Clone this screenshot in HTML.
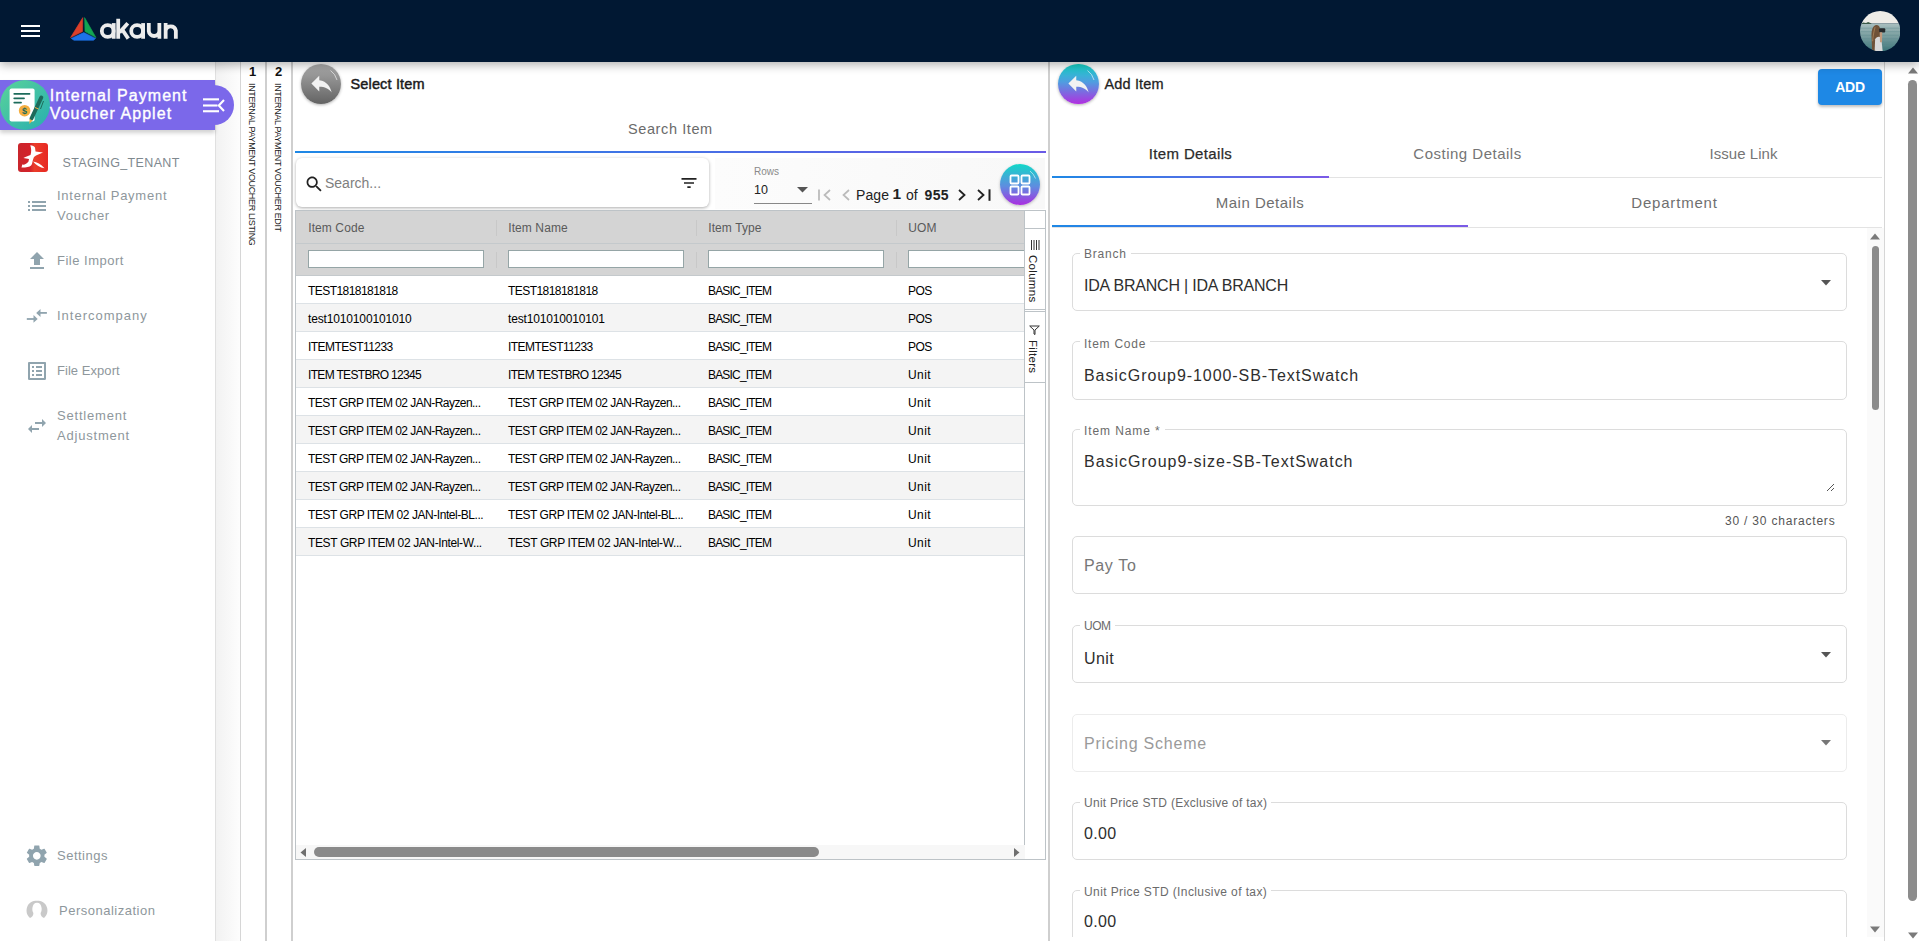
<!DOCTYPE html>
<html><head><meta charset="utf-8">
<style>
*{box-sizing:border-box;margin:0;padding:0}
html,body{width:1919px;height:941px;overflow:hidden;background:#fff;font-family:"Liberation Sans",sans-serif;color:#333}
.abs{position:absolute}
#hdr{position:absolute;left:0;top:0;width:1919px;height:62px;background:#011833;z-index:5;box-shadow:0 3px 9px rgba(0,0,0,.3)}
#side{position:absolute;left:0;top:62px;width:216px;height:879px;background:#fff;border-right:1px solid #e0e0e0}
.mi{position:absolute;left:57px;font-size:13px;line-height:20px;color:#8e979c;letter-spacing:0.5px}
.strip{position:absolute;top:62px;height:879px}
.vt{position:absolute;writing-mode:vertical-rl;font-size:9px;color:#222;white-space:nowrap;letter-spacing:0}
.gr{position:absolute;left:0;width:728px;height:28px;border-bottom:1px solid #dde2e6;font-size:12px;color:#000;letter-spacing:-0.55px}
.gr span{position:absolute;top:8px;white-space:nowrap;margin-left:-1px}
.gh{position:absolute;top:10px;font-size:12px;color:#5a5a5a;letter-spacing:0.1px;margin-left:-0.8px}
.gs{position:absolute;top:9px;width:1px;height:16px;background:#c8c8c8}
.gf{position:absolute;top:39.3px;width:176px;height:17.3px;background:#fff;border:1px solid #95a5a6}
.tab{position:absolute;top:83px;width:277px;text-align:center;font-size:15px;color:#757575;letter-spacing:0.35px}
.tab2{position:absolute;top:132px;width:416px;text-align:center;font-size:15px;color:#6f6f6f;letter-spacing:0.3px}
.fs{position:absolute;left:22px;width:775px;border:1px solid #dcdcdc;border-radius:5px;padding:0 7px}
.fs legend{font-size:12px;color:#6b6b6b;letter-spacing:0.7px;padding:0 4px;line-height:12px;margin-left:0}
.box{position:absolute;left:22px;width:775px;border:1px solid #dcdcdc;border-radius:5px}
.lbl{position:absolute;left:30px;padding:0 4px;background:#fff;font-size:12px;line-height:12px;color:#6b6b6b;white-space:nowrap}
.val{position:absolute;left:34px;font-size:16px;color:#2e2e2e;letter-spacing:0.9px;white-space:nowrap}
.arr{position:absolute;left:771px}
</style></head><body>
<div id="hdr">
  <div class="abs" style="left:20.5px;top:25px;width:19px;height:2px;background:#fff"></div>
  <div class="abs" style="left:20.5px;top:29.7px;width:19px;height:2px;background:#fff"></div>
  <div class="abs" style="left:20.5px;top:35px;width:19px;height:2px;background:#fff"></div>
  <svg class="abs" style="left:70px;top:17px" width="27" height="24" viewBox="0 0 27 24">
    <polygon points="12.8,0.6 0.5,20.6 12.5,14.6" fill="#dc3f2a" stroke="#dc3f2a" stroke-width=".6" stroke-linejoin="round"/>
    <polygon points="14.6,0.6 26,20.6 15,14.6" fill="#13a552" stroke="#13a552" stroke-width=".6" stroke-linejoin="round"/>
    <polygon points="1.2,21.4 13.8,15.6 25.6,21.4 23.5,23.3 4,23.3" fill="#1d72e8" stroke="#1d72e8" stroke-width=".6" stroke-linejoin="round"/>
  </svg>
  <svg class="abs" style="left:0;top:0" width="200" height="60" viewBox="0 0 200 60"><g fill="none" stroke="#ececec" stroke-width="3.8">
    <circle cx="107.7" cy="30.95" r="5.9"/><path d="M113.7 23.1V38.75"/>
    <path d="M118.2 18.75V38.75"/><path d="M119.5 32.5L127.8 23.3"/><path d="M122.3 29.8L128.3 38.6"/>
    <circle cx="137.1" cy="30.95" r="5.9"/><path d="M143.1 23.1V38.75"/>
    <path d="M148.8 23.1V31.2A5.3 5.3 0 0 0 159.35 31.2V23.1M159.35 31V38.75"/>
    <path d="M165.65 38.75V30.6A5.2 5.2 0 0 1 175.85 30.6V38.75M165.65 30.8V23.1"/>
  </g></svg>
  <svg class="abs" style="left:1860px;top:10.8px" width="40.4" height="40.4" viewBox="0 0 40 40">
    <defs><clipPath id="cc"><circle cx="20" cy="20" r="20"/></clipPath>
    <linearGradient id="sea" x1="0" y1="0" x2="0" y2="1"><stop offset="0" stop-color="#a9bfbf"/><stop offset=".45" stop-color="#7a9ea0"/><stop offset="1" stop-color="#3b7479"/></linearGradient></defs>
    <g clip-path="url(#cc)">
      <rect x="0" y="0" width="40" height="12.3" fill="#eeece7"/>
      <rect x="0" y="12.3" width="40" height="28" fill="url(#sea)"/>
      <g stroke="#5d8a8e" stroke-width=".6" opacity=".7"><path d="M0 17h40M0 20.5h40M0 24h40M0 27.5h40M0 31h40M0 34.5h40"/></g>
      <path d="M1.5 12.8 L3 11.5 L6 11.8 L8 11 L11 12.2 L11.5 12.8Z" fill="#3b5a48"/>
      <path d="M12 40 L11.5 27 C11 21 12 14.5 15.8 13.8 C18.5 13.6 19.8 15.5 20 18.5 L19.5 29 L18 40Z" fill="#6f5238"/>
      <path d="M12.5 30 C13 24 14 19 15 16" stroke="#a07a52" stroke-width="1" fill="none"/>
      <path d="M14.5 40 L15 28 C16 25.5 19 24.5 21 26.5 L22.5 40Z" fill="#d9d9d9"/>
      <rect x="19" y="17" width="6" height="4.2" rx="1" fill="#25292b"/>
      <path d="M19.5 21 L22 21 L21.8 31 L19.8 31Z" fill="#c29a7d"/>
    </g>
  </svg>

</div>

<div id="side">
</div>
<div class="abs" style="z-index:3;left:0;top:80px;width:215px;height:50px;background:#7b68ea;box-shadow:0 3px 4px rgba(0,0,0,.18)"></div>
<div class="abs" style="z-index:3;left:195px;top:85px;width:39px;height:40px;border-radius:0 20px 20px 0;background:#7b68ea"></div>
<div class="abs" style="z-index:3;left:0;top:80px;width:50px;height:50px;border-radius:50%;background:linear-gradient(135deg,#5ad39a,#27aeb0)"></div>
<svg class="abs" style="z-index:3;left:0;top:80px" width="50" height="50" viewBox="0 0 50 50">
  <rect x="9.6" y="8.4" width="25" height="33" rx="2" fill="#fff"/>
  <rect x="13.4" y="13" width="17" height="1.7" rx=".8" fill="#1d6b5b"/>
  <rect x="13.4" y="17.6" width="11.5" height="1.7" rx=".8" fill="#1d6b5b"/>
  <rect x="13.4" y="21.8" width="8.5" height="1.7" rx=".8" fill="#1d6b5b"/>
  <circle cx="24.6" cy="30.7" r="5.8" fill="#f4ae3f"/>
  <text x="24.6" y="34" font-size="9" text-anchor="middle" fill="#1d6b5b" font-family="Liberation Sans" font-weight="bold">$</text>
  <line x1="31.5" y1="38.5" x2="41.3" y2="17.5" stroke="#1d6b5b" stroke-width="4" stroke-linecap="round"/>
  <line x1="43.5" y1="21" x2="40.5" y2="29" stroke="#1d6b5b" stroke-width="1"/>
  <line x1="35" y1="27.5" x2="38.5" y2="29" stroke="#f4ae3f" stroke-width="1"/>
  <polygon points="29.3,44 29.6,39 32.6,40.4" fill="#f4ae3f"/>
</svg>
<div class="abs" style="z-index:3;left:49.8px;top:87px;font-size:16px;line-height:18px;color:#fff;letter-spacing:1.05px;-webkit-text-stroke:0.35px #fff">Internal Payment<br>Voucher Applet</div>
<svg class="abs" style="z-index:4;left:202.5px;top:97px" width="24" height="17" viewBox="0 0 24 17">
  <rect x="0" y="1.3" width="16" height="2.1" fill="#fff"/>
  <rect x="0" y="7.45" width="14.5" height="2.1" fill="#fff"/>
  <rect x="0" y="13.2" width="16" height="2.1" fill="#fff"/>
  <polyline points="21,3 15.8,8.5 21,14" fill="none" stroke="#fff" stroke-width="2.1"/>
</svg>
<div class="abs" style="left:18px;top:143.4px;width:30px;height:28.6px;border-radius:3px;background:linear-gradient(90deg,#c9262c,#d4222a 40%,#e93d2a 55%,#e82822)"></div>
<svg class="abs" style="left:18px;top:143.4px" width="30" height="29" viewBox="0 0 30 29">
  <path d="M12.3 2.3 C14.5 2.5 16.5 3.5 17 4.5 L17.5 8.5 L25 9.6 C22 11 18.5 12 16 14 C15 16 14.5 19 14 21 C13 23.5 11 24 7 24.5 L3.5 24.5 L4.3 21.5 C6 22 9 21 10.5 18.5 L11 16 L5.4 15 C8 13.5 11 12.5 12.5 12 C13.5 9 13.5 6 12.3 2.3 Z M15 18.5 C19 19 23 21 26.5 25.3 C22 24.5 18 22 15 18.5 Z" fill="#fff"/>
</svg>
<div class="abs" style="left:62.5px;top:156px;font-size:12.5px;line-height:14px;color:#7f898f;letter-spacing:0.35px">STAGING_TENANT</div>
<div class="mi" style="top:186px;letter-spacing:0.75px">Internal Payment<br>Voucher</div>
<svg class="abs" style="left:25px;top:194px" width="24" height="24" viewBox="0 0 24 24"><path fill="#90a4ae" d="M3 13h2v-2H3v2zm0 4h2v-2H3v2zm0-8h2V7H3v2zm4 4h14v-2H7v2zm0 4h14v-2H7v2zM7 7v2h14V7H7z"/></svg>
<div class="mi" style="top:251px">File Import</div>
<svg class="abs" style="left:24.5px;top:249px" width="24" height="24" viewBox="0 0 24 24"><path fill="#90a4ae" d="M9 16h6v-6h4l-7-7-7 7h4zm-4 2h14v2H5z"/></svg>
<div class="mi" style="top:306px;letter-spacing:1.0px">Intercompany</div>
<svg class="abs" style="left:20px;top:300px" width="40" height="30" viewBox="0 0 40 30"><g fill="#90a4ae"><rect x="6.8" y="18.1" width="8" height="1.8"/><polygon points="13.5,15 17.7,19 13.5,22.8"/><rect x="19.5" y="12" width="7.4" height="1.8"/><polygon points="20.5,8.9 16.2,12.9 20.5,16.9"/></g></svg>
<div class="mi" style="top:361px;letter-spacing:0.05px">File Export</div>
<svg class="abs" style="left:24.6px;top:359px" width="24" height="24" viewBox="0 0 24 24"><path fill="#90a4ae" d="M19 5v14H5V5h14m1.1-2H3.9c-.5 0-.9.4-.9.9v16.2c0 .4.4.9.9.9h16.2c.4 0 .9-.5.9-.9V3.9c0-.5-.5-.9-.9-.9zM11 7h6v2h-6V7zm0 4h6v2h-6v-2zm0 4h6v2h-6zM7 7h2v2H7zm0 4h2v2H7zm0 4h2v2H7z"/></svg>
<div class="mi" style="top:406px;letter-spacing:0.8px">Settlement<br>Adjustment</div>
<svg class="abs" style="left:25px;top:413.8px" width="24" height="24" viewBox="0 0 24 24"><path fill="#90a4ae" d="M6.99 11L3 15l3.99 4v-3H14v-2H6.99v-3zM21 9l-3.99-4v3H10v2h7.01v3L21 9z"/></svg>
<div class="mi" style="top:846px">Settings</div>
<svg class="abs" style="left:24.2px;top:843.2px" width="25.6" height="25.6" viewBox="0 0 24 24"><path fill="#90a4ae" d="M19.14 12.94c.04-.3.06-.61.06-.94 0-.32-.02-.64-.07-.94l2.03-1.58c.18-.14.23-.41.12-.61l-1.92-3.32c-.12-.22-.37-.29-.59-.22l-2.39.96c-.5-.38-1.03-.7-1.62-.94l-.36-2.54c-.04-.24-.24-.41-.48-.41h-3.84c-.24 0-.43.17-.47.41l-.36 2.54c-.59.24-1.13.57-1.62.94l-2.39-.96c-.22-.08-.47 0-.59.22L2.74 8.87c-.12.21-.08.47.12.61l2.03 1.58c-.05.3-.09.63-.09.94s.02.64.07.94l-2.03 1.58c-.18.14-.23.41-.12.61l1.92 3.32c.12.22.37.29.59.22l2.39-.96c.5.38 1.03.7 1.62.94l.36 2.54c.05.24.24.41.48.41h3.84c.24 0 .44-.17.47-.41l.36-2.54c.59-.24 1.13-.56 1.62-.94l2.39.96c.22.08.47 0 .59-.22l1.92-3.32c.12-.22.07-.47-.12-.61l-2.01-1.58zM12 15.6c-1.98 0-3.6-1.62-3.6-3.6s1.62-3.6 3.6-3.6 3.6 1.62 3.6 3.6-1.62 3.6-3.6 3.6z"/></svg>
<div class="mi" style="top:901px;left:59px">Personalization</div>
<svg class="abs" style="left:26px;top:900px" width="22" height="19" viewBox="0 0 22 19"><path fill="#c9c9c9" d="M4 18 C0.5 15 0 11 1 7.5 C2.5 2.5 6.5 0.8 11 0.8 C15.5 0.8 19.5 2.5 21 7.5 C22 11 21.5 15 18 18 C16 17.5 14.5 15.5 14.6 13 C15.6 11.5 15.8 9.5 15.6 8 C15.2 4.5 13.5 2.8 11 2.8 C8.5 2.8 6.8 4.5 6.4 8 C6.2 9.5 6.4 11.5 7.4 13 C7.5 15.5 6 17.5 4 18Z"/></svg>
<div class="strip" style="left:216px;width:25px;background:linear-gradient(90deg,#f2f2f2,#fdfdfd);border-right:1px solid #d6d6d6"></div>
<div class="strip" style="left:241px;width:26px;background:#fff;border-right:2px solid #cfcfcf"></div>
<div class="strip" style="left:267px;width:25px;background:#fff;border-right:1px solid #cfcfcf"></div>
<div class="abs" style="left:292px;top:62px;width:1px;height:879px;background:#cfcfcf;z-index:2"></div>

<div class="vt" style="left:247px;top:82.5px;z-index:2;letter-spacing:-0.35px">INTERNAL PAYMENT VOUCHER LISTING</div>
<div class="vt" style="left:273px;top:82.5px;z-index:2;letter-spacing:-0.36px">INTERNAL PAYMENT VOUCHER EDIT</div>
<div class="abs" style="left:249px;top:64px;font-size:13px;font-weight:bold;color:#111;z-index:2">1</div>
<div class="abs" style="left:275px;top:64px;font-size:13px;font-weight:bold;color:#111;z-index:2">2</div>

<div id="center" class="abs" style="left:292px;top:62px;width:757px;height:879px;background:#fff;border-right:1px solid #cfcfcf">
  <div class="abs" style="left:9px;top:2px;width:40px;height:40px;border-radius:50%;background:linear-gradient(180deg,#ababab,#636363);box-shadow:0 1px 3px rgba(0,0,0,.3)"></div>
  <svg class="abs" style="left:15.6px;top:8px" width="27" height="27" viewBox="0 0 24 24"><path fill="#f2f2f2" d="M10 9V5l-7 7 7 7v-4.1c5 0 8.5 1.6 11 5.1-1-5-4-10-11-11z"/></svg>
  <svg class="abs" style="left:9px;top:2px" width="40" height="40" viewBox="0 0 40 40"><path d="M29.5 6.5 A17 17 0 0 1 36 16" fill="none" stroke="rgba(255,255,255,.75)" stroke-width=".8"/></svg>
  <div class="abs" style="left:58.5px;top:13.5px;font-size:14.5px;color:#1a1a1a;letter-spacing:0.15px;-webkit-text-stroke:0.45px #1a1a1a">Select Item</div>
  <div class="abs" style="left:336px;top:59px;font-size:14.5px;color:#6b6b6b;letter-spacing:0.6px">Search Item</div>
  <div class="abs" style="left:3px;top:89px;width:751px;height:2px;background:linear-gradient(90deg,#1e88e5,#6a5ae6)"></div>
  <div class="abs" style="left:4px;top:96px;width:413px;height:48.5px;border-radius:6px;background:#fff;box-shadow:0 1px 3.5px rgba(0,0,0,.33)"></div>
  <svg class="abs" style="left:12.4px;top:112px" width="20.6" height="20.6" viewBox="0 0 24 24"><path fill="#222" d="M15.5 14h-.79l-.28-.27C15.41 12.59 16 11.11 16 9.5 16 5.91 13.09 3 9.5 3S3 5.91 3 9.5 5.91 16 9.5 16c1.61 0 3.09-.59 4.23-1.57l.27.28v.79l5 4.99L20.49 19l-4.99-5zm-6 0C7.01 14 5 11.99 5 9.5S7.01 5 9.5 5 14 7.01 14 9.5 11.99 14 9.5 14z"/></svg>
  <div class="abs" style="left:33px;top:113px;font-size:14px;color:#7e7e7e;letter-spacing:0px">Search...</div>
  <svg class="abs" style="left:386.5px;top:111px" width="20" height="20" viewBox="0 0 24 24"><path fill="#222" d="M10 18h4v-2h-4v2zM3 6v2h18V6H3zm3 7h12v-2H6v2z"/></svg>
  <div class="abs" style="left:423px;top:96px;width:330px;height:51px;background:linear-gradient(90deg,#fcfcfc,#f8f8f8)"></div>
  <div class="abs" style="left:462px;top:104px;font-size:10px;color:#8a8a8a">Rows</div>
  <div class="abs" style="left:462px;top:121px;font-size:12.5px;color:#222">10</div>
  <svg class="abs" style="left:505px;top:125px" width="11" height="6" viewBox="0 0 11 6"><polygon points="0,0 11,0 5.5,5.5" fill="#555"/></svg>
  <div class="abs" style="left:462px;top:140.5px;width:58px;height:1px;background:#888"></div>
  <svg class="abs" style="left:525.5px;top:127px" width="14" height="12" viewBox="0 0 14 12"><path d="M1 0.5v11" stroke="#bbb" stroke-width="1.8"/><path d="M12 1L6.5 6 12 11" stroke="#bbb" stroke-width="1.7" fill="none"/></svg>
  <svg class="abs" style="left:548.5px;top:127px" width="10" height="12" viewBox="0 0 10 12"><path d="M8 1L2.5 6 8 11" stroke="#bbb" stroke-width="1.7" fill="none"/></svg>
  <div class="abs" style="left:564px;top:125px;font-size:14px;color:#222;letter-spacing:0.1px">Page</div>
  <div class="abs" style="left:600.5px;top:123px;font-size:15.5px;color:#222;font-weight:bold">1</div>
  <div class="abs" style="left:614px;top:125px;font-size:14px;color:#222">of</div>
  <div class="abs" style="left:632.5px;top:125px;font-size:14px;color:#222;font-weight:bold;letter-spacing:0.4px">955</div>
  <svg class="abs" style="left:664.5px;top:127px" width="10" height="12" viewBox="0 0 10 12"><path d="M2 1L7.5 6 2 11" stroke="#222" stroke-width="1.8" fill="none"/></svg>
  <svg class="abs" style="left:683.5px;top:127px" width="16" height="12" viewBox="0 0 16 12"><path d="M2 1L7.5 6 2 11" stroke="#222" stroke-width="1.8" fill="none"/><path d="M13.5 0.3v11.5" stroke="#222" stroke-width="2"/></svg>
  <div class="abs" style="left:708px;top:102px;width:40px;height:41px;border-radius:50%;background:linear-gradient(180deg,#12d8c8,#5f8ce0 55%,#a92fe0);box-shadow:0 1px 3px rgba(0,0,0,.25)"></div>
  <svg class="abs" style="left:708px;top:102px" width="40" height="41" viewBox="0 0 40 41"><path d="M30 7 A17 17 0 0 1 35.5 14.5" fill="none" stroke="rgba(255,255,255,.7)" stroke-width=".8"/></svg>
  <svg class="abs" style="left:717px;top:112px" width="22" height="22" viewBox="0 0 22 22"><g fill="none" stroke="#fff" stroke-width="1.8"><rect x="1.5" y="1.5" width="8" height="8" rx="1"/><rect x="12.5" y="1.5" width="8" height="8" rx="1"/><rect x="1.5" y="12.5" width="8" height="8" rx="1"/><rect x="12.5" y="12.5" width="8" height="8" rx="1"/></g></svg>

  <div id="grid" class="abs" style="left:3px;top:148px;width:751px;height:650px;border:1px solid #bdc3c7;background:#fff;overflow:hidden">
    <div class="abs" style="left:0;top:0;width:728px;height:65px;background:#d4d4d4"></div>
    <div class="abs" style="left:0;top:32px;width:728px;height:1px;background:#c4c9cc"></div>
    <div class="abs" style="left:0;top:64px;width:728px;height:1px;background:#c4c9cc"></div>
    <div class="gh" style="left:13px">Item Code</div><div class="gh" style="left:213px">Item Name</div><div class="gh" style="left:413px">Item Type</div><div class="gh" style="left:613px">UOM</div>
    <div class="gs" style="left:200px"></div><div class="gs" style="left:400px"></div><div class="gs" style="left:600px"></div>
    <div class="gs" style="left:200px;top:41px;height:16px"></div><div class="gs" style="left:400px;top:41px;height:16px"></div><div class="gs" style="left:600px;top:41px;height:16px"></div>
    <div class="gf" style="left:12px"></div><div class="gf" style="left:212px"></div><div class="gf" style="left:412px"></div><div class="gf" style="left:612px;width:130px"></div>
<div class="gr" style="top:65px;background:#fff"><span style="left:13px">TEST1818181818</span><span style="left:213px">TEST1818181818</span><span style="left:413px;letter-spacing:-0.82px">BASIC_ITEM</span><span style="left:613px">POS</span></div>
<div class="gr" style="top:93px;background:#f4f4f4"><span style="left:13px;letter-spacing:-0.15px">test1010100101010</span><span style="left:213px;letter-spacing:-0.17px">test101010010101</span><span style="left:413px;letter-spacing:-0.82px">BASIC_ITEM</span><span style="left:613px">POS</span></div>
<div class="gr" style="top:121px;background:#fff"><span style="left:13px">ITEMTEST11233</span><span style="left:213px">ITEMTEST11233</span><span style="left:413px;letter-spacing:-0.82px">BASIC_ITEM</span><span style="left:613px">POS</span></div>
<div class="gr" style="top:149px;background:#f4f4f4"><span style="left:13px;letter-spacing:-0.67px">ITEM TESTBRO 12345</span><span style="left:213px;letter-spacing:-0.67px">ITEM TESTBRO 12345</span><span style="left:413px;letter-spacing:-0.82px">BASIC_ITEM</span><span style="left:613px;letter-spacing:0.45px">Unit</span></div>
<div class="gr" style="top:177px;background:#fff"><span style="left:13px">TEST GRP ITEM 02 JAN-Rayzen...</span><span style="left:213px">TEST GRP ITEM 02 JAN-Rayzen...</span><span style="left:413px;letter-spacing:-0.82px">BASIC_ITEM</span><span style="left:613px;letter-spacing:0.45px">Unit</span></div>
<div class="gr" style="top:205px;background:#f4f4f4"><span style="left:13px">TEST GRP ITEM 02 JAN-Rayzen...</span><span style="left:213px">TEST GRP ITEM 02 JAN-Rayzen...</span><span style="left:413px;letter-spacing:-0.82px">BASIC_ITEM</span><span style="left:613px;letter-spacing:0.45px">Unit</span></div>
<div class="gr" style="top:233px;background:#fff"><span style="left:13px">TEST GRP ITEM 02 JAN-Rayzen...</span><span style="left:213px">TEST GRP ITEM 02 JAN-Rayzen...</span><span style="left:413px;letter-spacing:-0.82px">BASIC_ITEM</span><span style="left:613px;letter-spacing:0.45px">Unit</span></div>
<div class="gr" style="top:261px;background:#f4f4f4"><span style="left:13px">TEST GRP ITEM 02 JAN-Rayzen...</span><span style="left:213px">TEST GRP ITEM 02 JAN-Rayzen...</span><span style="left:413px;letter-spacing:-0.82px">BASIC_ITEM</span><span style="left:613px;letter-spacing:0.45px">Unit</span></div>
<div class="gr" style="top:289px;background:#fff"><span style="left:13px;letter-spacing:-0.45px">TEST GRP ITEM 02 JAN-Intel-BL...</span><span style="left:213px;letter-spacing:-0.45px">TEST GRP ITEM 02 JAN-Intel-BL...</span><span style="left:413px;letter-spacing:-0.82px">BASIC_ITEM</span><span style="left:613px;letter-spacing:0.45px">Unit</span></div>
<div class="gr" style="top:317px;background:#f4f4f4"><span style="left:13px;letter-spacing:-0.38px">TEST GRP ITEM 02 JAN-Intel-W...</span><span style="left:213px;letter-spacing:-0.38px">TEST GRP ITEM 02 JAN-Intel-W...</span><span style="left:413px;letter-spacing:-0.82px">BASIC_ITEM</span><span style="left:613px;letter-spacing:0.45px">Unit</span></div>

    <div class="abs" style="left:728px;top:0;width:22px;height:650px;border-left:1px solid #bdc3c7;background:#fff"></div>
    <div class="abs" style="left:728px;top:17px;width:22px;height:1px;background:#bdc3c7"></div>
    <div class="abs" style="left:728px;top:98px;width:22px;height:1px;background:#bdc3c7"></div>
    <div class="abs" style="left:728px;top:100px;width:22px;height:1px;background:#bdc3c7"></div>
    <div class="abs" style="left:728px;top:171px;width:22px;height:1px;background:#bdc3c7"></div>
    <svg class="abs" style="left:734px;top:29px" width="10" height="10" viewBox="0 0 10 10"><g stroke="#333" stroke-width="1"><path d="M1.5 0v10M4 0v10M6.5 0v10M9 0v10"/></g></svg>
    <div class="abs" style="left:730px;top:44px;width:14px;height:46px;line-height:14px;writing-mode:vertical-rl;font-size:11.5px;color:#222;letter-spacing:0.3px">Columns</div>
    <svg class="abs" style="left:733px;top:114px" width="11" height="10" viewBox="0 0 11 10"><path d="M0.7 1h9.6L6 5v4.5L5 9V5z" fill="none" stroke="#333" stroke-width="1"/></svg>
    <div class="abs" style="left:730px;top:129px;width:14px;height:40px;line-height:14px;writing-mode:vertical-rl;font-size:11.5px;color:#222;letter-spacing:0.3px">Filters</div>
    <div class="abs" style="left:0;top:634px;width:729px;height:15px;background:#f7f7f7"></div>
    <div class="abs" style="left:17.5px;top:636px;width:505px;height:9.5px;border-radius:5px;background:#8a8a8a"></div>
    <svg class="abs" style="left:3px;top:636px" width="8" height="11" viewBox="0 0 8 11"><polygon points="7,1 7,10 1.5,5.5" fill="#6f6f6f"/></svg>
    <svg class="abs" style="left:717px;top:636px" width="8" height="11" viewBox="0 0 8 11"><polygon points="1,1 1,10 6.5,5.5" fill="#6f6f6f"/></svg>
  </div>
</div>

<div id="right" class="abs" style="left:1049px;top:62px;width:836px;height:879px;background:#fff;border-left:1px solid #cfcfcf;border-right:1px solid #d6d6d6">
  <div class="abs" style="left:8px;top:1.5px;width:40.5px;height:40.5px;border-radius:50%;background:linear-gradient(180deg,#14d4c6 0%,#4f9de0 45%,#b12fe0 100%);box-shadow:0 1px 3px rgba(0,0,0,.3)"></div>
  <svg class="abs" style="left:14.5px;top:7.5px" width="27" height="27" viewBox="0 0 24 24"><path fill="#f2f2f2" d="M10 9V5l-7 7 7 7v-4.1c5 0 8.5 1.6 11 5.1-1-5-4-10-11-11z"/></svg>
  <svg class="abs" style="left:8px;top:1.5px" width="40" height="40" viewBox="0 0 40 40"><path d="M29.5 6.5 A17 17 0 0 1 36 16" fill="none" stroke="rgba(255,255,255,.75)" stroke-width=".8"/></svg>
  <div class="abs" style="left:54.5px;top:13.5px;font-size:14.5px;color:#1f1f1f;letter-spacing:0.15px;-webkit-text-stroke:0.3px #1f1f1f">Add Item</div>
  <div class="abs" style="left:768px;top:7px;width:64px;height:36px;border-radius:4px;background:#1e88e5;box-shadow:0 2px 3px rgba(0,0,0,.25)"></div>
  <div class="abs" style="left:768px;top:17px;width:64px;text-align:center;font-size:14px;font-weight:bold;color:#fff;letter-spacing:-0.2px">ADD</div>

  <div class="tab" style="left:2px;color:#2b2b2b;-webkit-text-stroke:0.25px #2b2b2b">Item Details</div>
  <div class="tab" style="left:279px;letter-spacing:0.5px">Costing Details</div>
  <div class="tab" style="left:556px;letter-spacing:0.05px;text-indent:-2px">Issue Link</div>
  <div class="abs" style="left:2px;top:115px;width:830px;height:1px;background:#e3e3e3"></div>
  <div class="abs" style="left:2px;top:113.5px;width:277px;height:2px;background:linear-gradient(90deg,#1e88e5,#7b5ae6)"></div>
  <div class="tab2" style="left:2px;letter-spacing:0.5px">Main Details</div>
  <div class="tab2" style="left:418px;letter-spacing:0.8px;text-indent:-3px">Department</div>
  <div class="abs" style="left:2px;top:164.5px;width:830px;height:1px;background:#e3e3e3"></div>
  <div class="abs" style="left:2px;top:162.5px;width:416px;height:2px;background:linear-gradient(90deg,#1e88e5,#7b5ae6)"></div>

  <div class="abs" style="left:817px;top:166px;width:17px;height:709px;background:#fafafa"></div>
  <svg class="abs" style="left:819.5px;top:171px" width="10" height="7" viewBox="0 0 10 7"><polygon points="0,6.5 10,6.5 5,0.5" fill="#7a7a7a"/></svg>
  <div class="abs" style="left:821.5px;top:184px;width:7.5px;height:164px;border-radius:4px;background:#8c8c8c"></div>
  <svg class="abs" style="left:819.5px;top:863.5px" width="10" height="7" viewBox="0 0 10 7"><polygon points="0,0.5 10,0.5 5,6.5" fill="#7a7a7a"/></svg>

  <div class="box" style="top:191px;height:58px"></div>
  <div class="lbl" style="top:186.3px;letter-spacing:0.8px">Branch</div>
  <div class="val" style="top:214.5px;letter-spacing:-0.2px">IDA BRANCH | IDA BRANCH</div>
  <svg class="arr" style="top:217.5px" width="10" height="6" viewBox="0 0 10 6"><polygon points="0,0 10,0 5,5.5" fill="#555"/></svg>

  <div class="box" style="top:279px;height:59px"></div>
  <div class="lbl" style="top:275.5px;letter-spacing:0.75px">Item Code</div>
  <div class="val" style="top:304.5px;letter-spacing:0.93px">BasicGroup9-1000-SB-TextSwatch</div>

  <div class="box" style="top:367px;height:77px"></div>
  <div class="lbl" style="top:363px;letter-spacing:0.9px">Item Name *</div>
  <div class="val" style="top:391px;letter-spacing:0.98px">BasicGroup9-size-SB-TextSwatch</div>
  <svg class="abs" style="left:776px;top:421px" width="9" height="9" viewBox="0 0 9 9"><path d="M1 8L8 1M5 8L8 5" stroke="#555" stroke-width="1"/></svg>
  <div class="abs" style="left:675px;top:451.5px;font-size:12px;color:#555;letter-spacing:0.8px">30 / 30 characters</div>

  <div class="box" style="top:473.8px;height:58px"></div>
  <div class="val" style="top:494.5px;color:#777;letter-spacing:0.65px">Pay To</div>

  <div class="box" style="top:562.5px;height:58px"></div>
  <div class="lbl" style="top:558.4px;letter-spacing:-0.5px">UOM</div>
  <div class="val" style="top:588px;letter-spacing:0.4px">Unit</div>
  <svg class="arr" style="top:589.5px" width="10" height="6" viewBox="0 0 10 6"><polygon points="0,0 10,0 5,5.5" fill="#555"/></svg>

  <div class="box" style="top:652px;height:58px;border-color:#ececec"></div>
  <div class="val" style="top:672.5px;color:#9a9a9a;letter-spacing:0.78px">Pricing Scheme</div>
  <svg class="arr" style="top:677.5px" width="10" height="6" viewBox="0 0 10 6"><polygon points="0,0 10,0 5,5.5" fill="#777"/></svg>

  <div class="box" style="top:739.5px;height:58px"></div>
  <div class="lbl" style="top:735.2px;letter-spacing:0.28px">Unit Price STD (Exclusive of tax)</div>
  <div class="val" style="top:763px;letter-spacing:0.35px">0.00</div>

  <div class="box" style="top:827.5px;height:80px"></div>
  <div class="lbl" style="top:823.6px;letter-spacing:0.4px">Unit Price STD (Inclusive of tax)</div>
  <div class="val" style="top:851.3px;letter-spacing:0.35px">0.00</div>
</div>
<div class="abs" style="left:1050px;top:937px;width:816px;height:4px;background:#fff"></div>
<div class="abs" style="left:1885px;top:62px;width:34px;height:879px;background:#fff"></div>
<svg class="abs" style="left:1907.5px;top:67px" width="10" height="7" viewBox="0 0 10 7"><polygon points="0,6.5 10,6.5 5,0.5" fill="#7a7a7a"/></svg>
<div class="abs" style="left:1908px;top:80px;width:9px;height:821px;border-radius:4.5px;background:#8c8c8c"></div>
<svg class="abs" style="left:1907.5px;top:931.5px" width="10" height="7" viewBox="0 0 10 7"><polygon points="0,0.5 10,0.5 5,6.5" fill="#7a7a7a"/></svg>

</body></html>
